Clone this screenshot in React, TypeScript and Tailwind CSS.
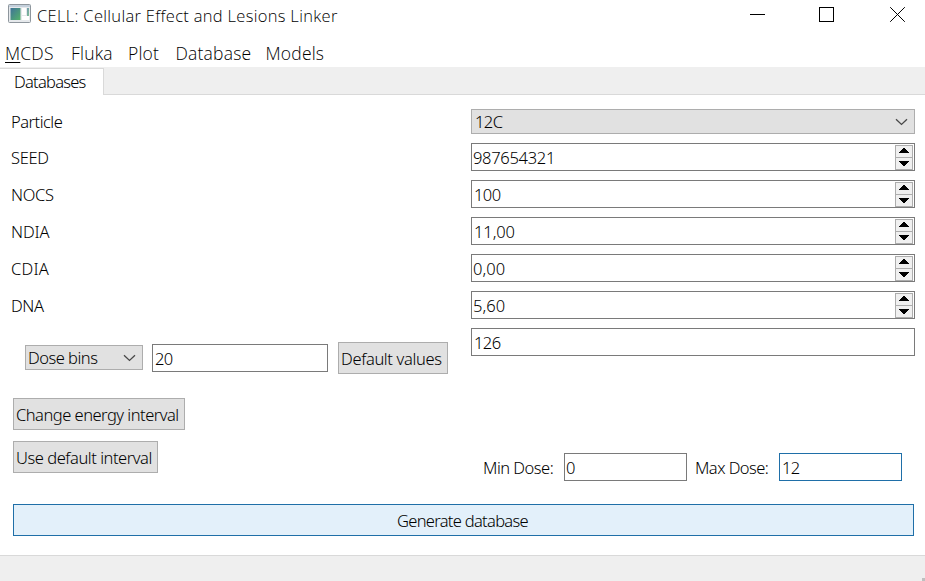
import type { ReactNode } from "react";

const ui = "font-['Noto_Sans',sans-serif]";
const chrome = "font-['Open_Sans',sans-serif]";

function Chevron() {
  return (
    <svg width="13" height="8" viewBox="0 0 13 8" className="shrink-0" fill="none" stroke="#484848" strokeWidth="1.3">
      <path d="M1 1.2 L6.5 6.4 L12 1.2" />
    </svg>
  );
}

function Combo({ className, children }: { className: string; children: ReactNode }) {
  return (
    <div className={`flex h-[25px] items-center justify-between border border-[#adadad] bg-[#e1e1e1] pr-[6px] ${className}`}>
      {children}
      <Chevron />
    </div>
  );
}

function Button({ className, children }: { className: string; children: ReactNode }) {
  return (
    <button className={`flex h-8 shrink-0 items-center whitespace-nowrap border border-[#adadad] bg-[#e1e1e1] pt-[2px] pl-[2px] ${className}`}>
      {children}
    </button>
  );
}

function Arrow({ up }: { up?: boolean }) {
  return (
    <div className={`flex w-4 items-start bg-[#f0f0f0] pl-[3px] ${up ? "h-[11px] pt-[2px]" : "h-[11px] pt-[3px]"}`}>
      <svg width="10" height="5" viewBox="0 0 10 5" shapeRendering="crispEdges">
        <path d={up ? "M0 5 L4 0 H6 L10 5 Z" : "M0 0 L4 5 H6 L10 0 Z"} fill="#000" />
      </svg>
    </div>
  );
}

function Field({ value, spin, className }: { value: string; spin?: boolean; className: string }) {
  return (
    <div className={`flex h-7 items-center justify-between border bg-white pr-px ${className}`}>
      <span className="pt-[2px]">{value}</span>
      {spin && (
        <div className="mt-px flex flex-col gap-px self-start border border-[#adadad] bg-[#adadad]">
          <Arrow up />
          <Arrow />
        </div>
      )}
    </div>
  );
}

const rows = [
  { label: "SEED", value: "987654321", pad: "pl-px", track: "tracking-[-0.3px]", labelTrack: "tracking-[-0.3px]" },
  { label: "NOCS", value: "100", pad: "pl-[2px]", track: "tracking-[-0.6px]", labelTrack: "tracking-[-0.35px]" },
  { label: "NDIA", value: "11,00", pad: "pl-[2px]", track: "tracking-[-0.1px]", labelTrack: "tracking-[-0.1px]" },
  { label: "CDIA", value: "0,00", pad: "pl-px", track: "tracking-[0.1px]", labelTrack: "tracking-[0.2px]" },
  { label: "DNA", value: "5,60", pad: "pl-px", track: "tracking-[0.1px]", labelTrack: "tracking-[-0.4px]" },
];

export default function App() {
  return (
    <div className={`flex h-[581px] w-[925px] flex-col overflow-hidden bg-white text-[16.5px] leading-5 font-light text-black ${ui}`}>
      <header className={`flex h-[38px] shrink-0 items-start justify-between pl-2 ${chrome}`}>
        <div className="flex items-start">
          <svg width="23" height="19" viewBox="0 0 23 19" className="mt-1">
            <defs>
              <linearGradient id="pane" x1="0" y1="0" x2="1" y2="1">
                <stop offset="0" stopColor="#3f7298" />
                <stop offset="1" stopColor="#54b36a" />
              </linearGradient>
            </defs>
            <rect x="0.5" y="0.5" width="22" height="18" rx="1" fill="#e6e9ec" stroke="#8e969d" />
            <rect x="1" y="1" width="21" height="2" fill="#c4d0dc" />
            <rect x="2.5" y="4" width="10" height="12" fill="url(#pane)" />
            <rect x="14" y="4" width="4" height="7" fill="#fff" />
            <rect x="19" y="4" width="2" height="8" fill="url(#pane)" opacity="0.7" />
            <rect x="14" y="12" width="7" height="4" fill="#fff" />
          </svg>
          <span className="ml-[6px] mt-[6px] text-[16.5px] leading-5 tracking-[0.31px] whitespace-nowrap">CELL: Cellular Effect and Lesions Linker</span>
        </div>
        <svg width="175" height="30" viewBox="0 0 175 30" fill="none" stroke="#000">
          <path d="M0 14.5 H15" />
          <rect x="69.5" y="7.5" width="14" height="14" />
          <path d="M140.2 7.2 L154.8 21.8 M154.8 7.2 L140.2 21.8" />
        </svg>
      </header>
      <nav className={`flex h-[29px] shrink-0 pt-[5px] pl-[5px] text-[17.5px] tracking-[0.2px] whitespace-nowrap ${chrome}`}>
        <span className="w-[66px]"><u className="underline-offset-2">M</u>CDS</span>
        <span className="w-[57px]">Fluka</span>
        <span className="w-[47.5px]">Plot</span>
        <span className="w-[90px]">Database</span>
        <span>Models</span>
      </nav>
      <div className="flex h-7 shrink-0 bg-[#efefef] pt-px">
        <div className="w-[104px] border-t border-r border-[#d9d9d9] bg-white pt-[3px] pl-[14px] tracking-[-0.75px]">Databases</div>
        <div className="flex-1 border-b border-[#d9d9d9]" />
      </div>
      <main className="flex h-[460px] shrink-0 flex-col">
        <div className="flex h-[289px] shrink-0 justify-between pr-[10px] pl-[11px]">
          <div className="flex w-[437px] flex-col">
            <span className="mt-[17px] h-9 tracking-[-0.5px]">Particle</span>
            {rows.map((r) => (
              <span key={r.label} className={`h-[37px] ${r.labelTrack}`}>{r.label}</span>
            ))}
            <div className="mt-[9px] flex h-8 items-center pl-[14px]">
              <Combo className="mb-px w-[118px] pl-[2px] tracking-[-0.5px]">Dose bins</Combo>
              <Field className="ml-[9px] w-[176px] border-[#7a7a7a] pl-[2px] tracking-[-0.6px]" value="20" />
              <Button className="ml-[10px] w-[110px] tracking-[-0.35px]">Default values</Button>
            </div>
          </div>
          <div className="flex w-[444px] flex-col gap-[9px] pt-[14px]">
            <Combo className="w-full pl-[3px] tracking-[-0.6px]">12C</Combo>
            {rows.map((r) => (
              <Field key={r.label} value={r.value} spin className={`shrink-0 border-[#7a7a7a] ${r.pad} ${r.track}`} />
            ))}
            <Field value="126" className="shrink-0 border-[#7a7a7a] pl-[2px] tracking-[-0.6px]" />
          </div>
        </div>
        <div className="flex h-[120px] shrink-0 justify-between pt-[14px] pr-[23px] pl-[13px]">
          <div className="flex flex-col gap-[11px]">
            <Button className="w-[172px] tracking-[-0.5px]">Change energy interval</Button>
            <Button className="w-[145px] tracking-[-0.45px]">Use default interval</Button>
          </div>
          <div className="mt-[55px] flex h-7 w-[419px] items-center whitespace-nowrap">
            <span className="w-[81px] pt-[2px] tracking-[-0.5px]">Min Dose:</span>
            <Field value="0" className="w-[123px] border-[#7a7a7a] pl-px" />
            <span className="ml-2 w-[84px] pt-[2px] tracking-[-0.55px]">Max Dose:</span>
            <Field value="12" className="w-[123px] border-[#1f6fa8] pl-[2px] tracking-[-0.6px]" />
          </div>
        </div>
        <button className="ml-[13px] h-8 w-[901px] border border-[#1f6fa8] bg-[#e3f0fa] pt-[2px] pr-[2px] tracking-[-0.7px]">Generate database</button>
      </main>
      <footer className="flex flex-1 items-end justify-end border-t border-[#d9d9d9] bg-[#efefef]">
        <div className="size-[3px] bg-[#bfbfbf]" />
      </footer>
    </div>
  );
}
